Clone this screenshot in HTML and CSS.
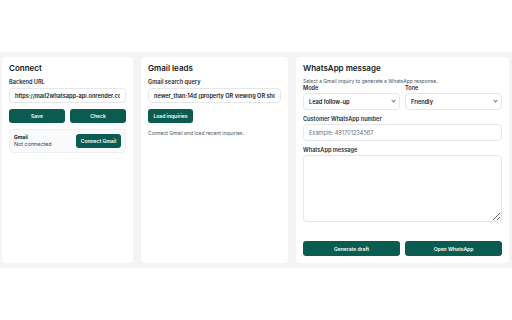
FILE: index.html
```html
<!doctype html>
<html lang="en">
<head>
  <meta charset="UTF-8">
  <meta name="viewport" content="width=device-width, initial-scale=1">
  <title>Mail2WhatsApp</title>
  <link rel="stylesheet" href="styles.css">
</head>
<body>
<div class="top"></div>
<main class="main">
  <div class="cards">
    <section class="card">
      <h2>Connect</h2>
      <label class="label" for="backendUrl">Backend URL</label>
      <input class="field field-sm" id="backendUrl" value="https://mail2whatsapp-api.onrender.com">
      <div class="row">
        <button class="btn">Save</button>
        <button class="btn">Check</button>
      </div>
      <div class="status">
        <div>
          <div class="status-title">Gmail</div>
          <div class="status-text">Not connected</div>
        </div>
        <button class="btn btn-inline">Connect Gmail</button>
      </div>
    </section>

    <section class="card">
      <h2>Gmail leads</h2>
      <label class="label" for="query">Gmail search query</label>
      <input class="field field-sm" id="query" value="newer_than:14d (property OR viewing OR showing)">
      <div>
        <button class="btn btn-inline btn-load">Load inquiries</button>
      </div>
      <p class="hint">Connect Gmail and load recent inquiries.</p>
    </section>

    <section class="card">
      <h2>WhatsApp message</h2>
      <p class="hint hint-top">Select a Gmail inquiry to generate a WhatsApp response.</p>
      <div class="row row-top">
        <div>
          <label class="label label-tight">Mode</label>
          <div class="select"><select><option>Lead follow-up</option></select></div>
        </div>
        <div>
          <label class="label label-tight">Tone</label>
          <div class="select"><select><option>Friendly</option></select></div>
        </div>
      </div>
      <label class="label label-gap" for="phone">Customer WhatsApp number</label>
      <input class="field" id="phone" placeholder="Example: 491701234567">
      <label class="label label-gap" for="msg">WhatsApp message</label>
      <textarea class="field area" id="msg"></textarea>
      <div class="row actions">
        <button class="btn btn-tall">Generate draft</button>
        <button class="btn btn-tall">Open WhatsApp</button>
      </div>
    </section>
  </div>
</main>
</body>
</html>
```

FILE: styles.css
```css
* {
  box-sizing: border-box;
}
body {
  margin: 0;
  font-family: Inter, "Noto Sans", sans-serif;
  background: #fff;
  color: #111827;
}
.top {
  height: 52px;
}
.main {
  background: #f3f4f6;
  padding: 5px 3px 5px 2px;
}
.cards {
  display: grid;
  grid-template-columns: 131px 147px 213px;
  gap: 8px;
  height: 206px;
}
.card {
  background: white;
  border-radius: 4px;
  padding: 7px;
  display: flex;
  flex-direction: column;
}
h2 {
  margin: 0;
  font-size: 8px;
  line-height: 9px;
  font-weight: 600;
  color: #111827;
}
.label {
  display: block;
  margin: 5px 0 2px;
  font-size: 5.6px;
  line-height: 8px;
  font-weight: 600;
  color: #1f2937;
}
.label-tight {
  margin: 0 0 2px;
  line-height: 6px;
}
.label-gap {
  margin: 5px 0 1px;
}
.field {
  display: block;
  width: 100%;
  height: 17px;
  border: 1px solid #e5e7eb;
  border-radius: 4px;
  padding: 0 5px;
  font-family: inherit;
  font-size: 5.6px;
  color: #111827;
  background: white;
  outline: none;
}
.field-sm {
  height: 15px;
  font-weight: 600;
}
.field::placeholder {
  color: #6b7280;
}
.area {
  height: 67px;
  padding: 4px 5px;
  resize: vertical;
}
.row {
  display: grid;
  grid-template-columns: 1fr 1fr;
  gap: 5px;
  margin-top: 6px;
}
.row-top {
  margin-top: 1px;
}
.btn {
  height: 14px;
  border: none;
  border-radius: 3px;
  background: #0b5c50;
  color: white;
  font-family: inherit;
  font-size: 5px;
  font-weight: 600;
  cursor: pointer;
  padding: 0 5px;
}
.btn:hover {
  opacity: 0.9;
}
.btn-tall {
  height: 15px;
}
.btn-load {
  display: block;
  margin-top: 6px;
  width: 44px;
  padding: 0;
}
.status {
  margin-top: 6px;
  display: flex;
  justify-content: space-between;
  align-items: center;
  background: #f9fafb;
  border: 1px solid #eef0f3;
  border-radius: 4px;
  padding: 4px;
  height: 24px;
}
.status-title {
  font-size: 5px;
  font-weight: 700;
  line-height: 7px;
}
.status-text {
  font-size: 5.4px;
  line-height: 7px;
  color: #374151;
}
.btn-inline {
  width: 45px;
  padding: 0;
}
.hint {
  margin: 7px 0 0;
  font-size: 5px;
  line-height: 7px;
  color: #4b5563;
}
.hint-top {
  margin: 5px 0 0;
  line-height: 6px;
}
.select {
  position: relative;
}
.select select {
  display: block;
  width: 100%;
  height: 17px;
  appearance: none;
  border: 1px solid #e5e7eb;
  border-radius: 4px;
  padding: 0 5px;
  font-family: inherit;
  font-size: 5.6px;
  font-weight: 600;
  color: #111827;
  background: white;
}
.select::after {
  content: "";
  position: absolute;
  right: 5px;
  top: 6px;
  width: 2px;
  height: 2px;
  border-right: 0.7px solid #6b7280;
  border-bottom: 0.7px solid #6b7280;
  transform: rotate(45deg);
}
.actions {
  margin-top: auto;
}
```
